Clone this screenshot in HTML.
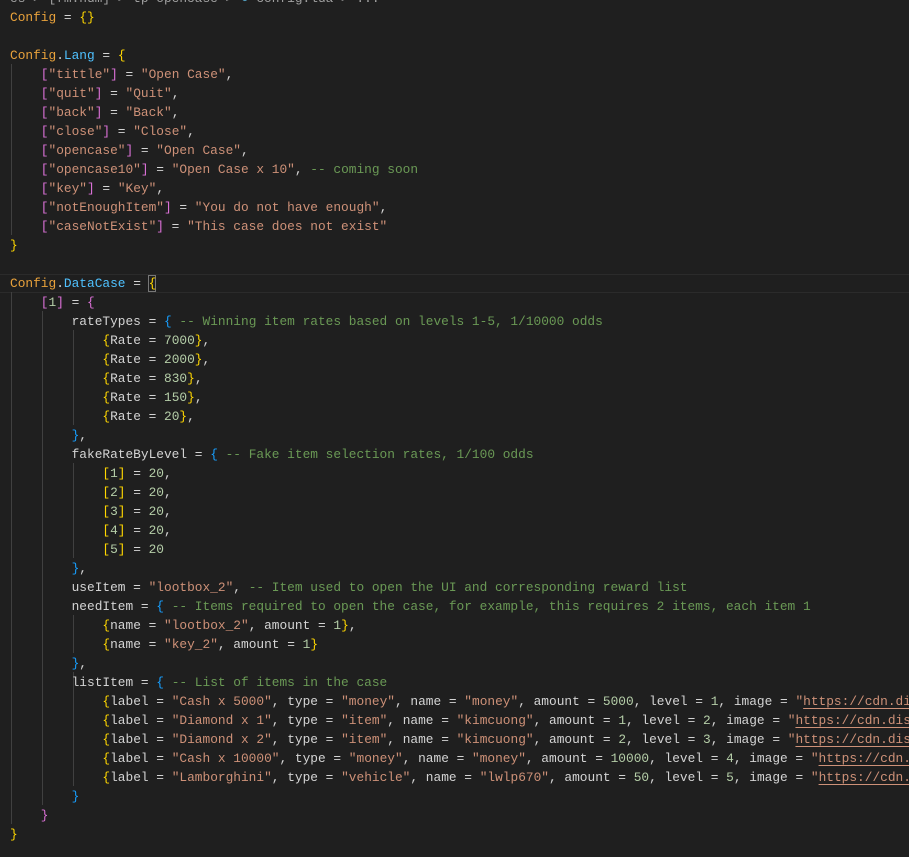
<!DOCTYPE html>
<html><head><meta charset="utf-8">
<style>
html,body{margin:0;padding:0;background:#1f1f1f;width:909px;height:857px;overflow:hidden;}
#ed{position:relative;width:909px;height:857px;overflow:hidden;}
pre{margin:0;position:absolute;left:10px;top:-11.5px;font-family:"Liberation Mono",monospace;font-size:12.83px;line-height:19px;color:#d4d4d4;white-space:pre;}
.c{color:#e9a23b}.p{color:#4fc1ff}.k{color:#d4d4d4}.s{color:#ce9178}.n{color:#b5cea8}.m{color:#6a9955}
.b1{color:#ffd700}.b2{color:#da70d6}.b3{color:#179fff}
.u{text-decoration:underline;text-underline-offset:3px}
.bc{color:#a0a0a0}
.g{position:absolute;width:1px;background:#404040}
.hl{position:absolute;left:0;width:909px;top:274px;height:19px;border-top:1px solid #2b2b2b;border-bottom:1px solid #2b2b2b;box-sizing:border-box}
.cur{position:absolute;left:148px;top:275px;width:8px;height:17px;border:1px solid #777;box-sizing:border-box}
</style></head><body><div id="ed">
<div class="hl"></div>
<div class="cur"></div>
<div class="g" style="left:11px;top:64px;height:171px"></div>
<div class="g" style="left:11px;top:292px;height:532px"></div>
<div class="g" style="left:42px;top:311px;height:494px"></div>
<div class="g" style="left:73px;top:330px;height:95px"></div>
<div class="g" style="left:73px;top:463px;height:95px"></div>
<div class="g" style="left:73px;top:615px;height:38px"></div>
<div class="g" style="left:73px;top:672px;height:114px"></div>
<pre><span class="bc">es &gt; [fm.num] &gt; tp-opencase &gt; <span style="color:#519aba">●</span> config.lua &gt; ...</span>
<span class="c">Config</span> = <span class="b1">{}</span>

<span class="c">Config</span>.<span class="p">Lang</span> = <span class="b1">{</span>
    <span class="b2">[</span><span class="s">"tittle"</span><span class="b2">]</span> = <span class="s">"Open Case"</span>,
    <span class="b2">[</span><span class="s">"quit"</span><span class="b2">]</span> = <span class="s">"Quit"</span>,
    <span class="b2">[</span><span class="s">"back"</span><span class="b2">]</span> = <span class="s">"Back"</span>,
    <span class="b2">[</span><span class="s">"close"</span><span class="b2">]</span> = <span class="s">"Close"</span>,
    <span class="b2">[</span><span class="s">"opencase"</span><span class="b2">]</span> = <span class="s">"Open Case"</span>,
    <span class="b2">[</span><span class="s">"opencase10"</span><span class="b2">]</span> = <span class="s">"Open Case x 10"</span>, <span class="m">-- coming soon</span>
    <span class="b2">[</span><span class="s">"key"</span><span class="b2">]</span> = <span class="s">"Key"</span>,
    <span class="b2">[</span><span class="s">"notEnoughItem"</span><span class="b2">]</span> = <span class="s">"You do not have enough"</span>,
    <span class="b2">[</span><span class="s">"caseNotExist"</span><span class="b2">]</span> = <span class="s">"This case does not exist"</span>
<span class="b1">}</span>

<span class="c">Config</span>.<span class="p">DataCase</span> = <span class="b1">{</span>
    <span class="b2">[</span><span class="n">1</span><span class="b2">]</span> = <span class="b2">{</span>
        <span class="k">rateTypes</span> = <span class="b3">{</span> <span class="m">-- Winning item rates based on levels 1-5, 1/10000 odds</span>
            <span class="b1">{</span><span class="k">Rate</span> = <span class="n">7000</span><span class="b1">}</span>,
            <span class="b1">{</span><span class="k">Rate</span> = <span class="n">2000</span><span class="b1">}</span>,
            <span class="b1">{</span><span class="k">Rate</span> = <span class="n">830</span><span class="b1">}</span>,
            <span class="b1">{</span><span class="k">Rate</span> = <span class="n">150</span><span class="b1">}</span>,
            <span class="b1">{</span><span class="k">Rate</span> = <span class="n">20</span><span class="b1">}</span>,
        <span class="b3">}</span>,
        <span class="k">fakeRateByLevel</span> = <span class="b3">{</span> <span class="m">-- Fake item selection rates, 1/100 odds</span>
            <span class="b1">[</span><span class="n">1</span><span class="b1">]</span> = <span class="n">20</span>,
            <span class="b1">[</span><span class="n">2</span><span class="b1">]</span> = <span class="n">20</span>,
            <span class="b1">[</span><span class="n">3</span><span class="b1">]</span> = <span class="n">20</span>,
            <span class="b1">[</span><span class="n">4</span><span class="b1">]</span> = <span class="n">20</span>,
            <span class="b1">[</span><span class="n">5</span><span class="b1">]</span> = <span class="n">20</span>
        <span class="b3">}</span>,
        <span class="k">useItem</span> = <span class="s">"lootbox_2"</span>, <span class="m">-- Item used to open the UI and corresponding reward list</span>
        <span class="k">needItem</span> = <span class="b3">{</span> <span class="m">-- Items required to open the case, for example, this requires 2 items, each item 1</span>
            <span class="b1">{</span><span class="k">name</span> = <span class="s">"lootbox_2"</span>, <span class="k">amount</span> = <span class="n">1</span><span class="b1">}</span>,
            <span class="b1">{</span><span class="k">name</span> = <span class="s">"key_2"</span>, <span class="k">amount</span> = <span class="n">1</span><span class="b1">}</span>
        <span class="b3">}</span>,
        <span class="k">listItem</span> = <span class="b3">{</span> <span class="m">-- List of items in the case</span>
            <span class="b1">{</span><span class="k">label</span> = <span class="s">"Cash x 5000"</span>, <span class="k">type</span> = <span class="s">"money"</span>, <span class="k">name</span> = <span class="s">"money"</span>, <span class="k">amount</span> = <span class="n">5000</span>, <span class="k">level</span> = <span class="n">1</span>, <span class="k">image</span> = <span class="s">"<span class="u">https://cdn.discordapp.com</span>"</span>
            <span class="b1">{</span><span class="k">label</span> = <span class="s">"Diamond x 1"</span>, <span class="k">type</span> = <span class="s">"item"</span>, <span class="k">name</span> = <span class="s">"kimcuong"</span>, <span class="k">amount</span> = <span class="n">1</span>, <span class="k">level</span> = <span class="n">2</span>, <span class="k">image</span> = <span class="s">"<span class="u">https://cdn.discordapp.com</span>"</span>
            <span class="b1">{</span><span class="k">label</span> = <span class="s">"Diamond x 2"</span>, <span class="k">type</span> = <span class="s">"item"</span>, <span class="k">name</span> = <span class="s">"kimcuong"</span>, <span class="k">amount</span> = <span class="n">2</span>, <span class="k">level</span> = <span class="n">3</span>, <span class="k">image</span> = <span class="s">"<span class="u">https://cdn.discordapp.com</span>"</span>
            <span class="b1">{</span><span class="k">label</span> = <span class="s">"Cash x 10000"</span>, <span class="k">type</span> = <span class="s">"money"</span>, <span class="k">name</span> = <span class="s">"money"</span>, <span class="k">amount</span> = <span class="n">10000</span>, <span class="k">level</span> = <span class="n">4</span>, <span class="k">image</span> = <span class="s">"<span class="u">https://cdn.discordapp.com</span>"</span>
            <span class="b1">{</span><span class="k">label</span> = <span class="s">"Lamborghini"</span>, <span class="k">type</span> = <span class="s">"vehicle"</span>, <span class="k">name</span> = <span class="s">"lwlp670"</span>, <span class="k">amount</span> = <span class="n">50</span>, <span class="k">level</span> = <span class="n">5</span>, <span class="k">image</span> = <span class="s">"<span class="u">https://cdn.discordapp.com</span>"</span>
        <span class="b3">}</span>
    <span class="b2">}</span>
<span class="b1">}</span></pre>
</div></body></html>
